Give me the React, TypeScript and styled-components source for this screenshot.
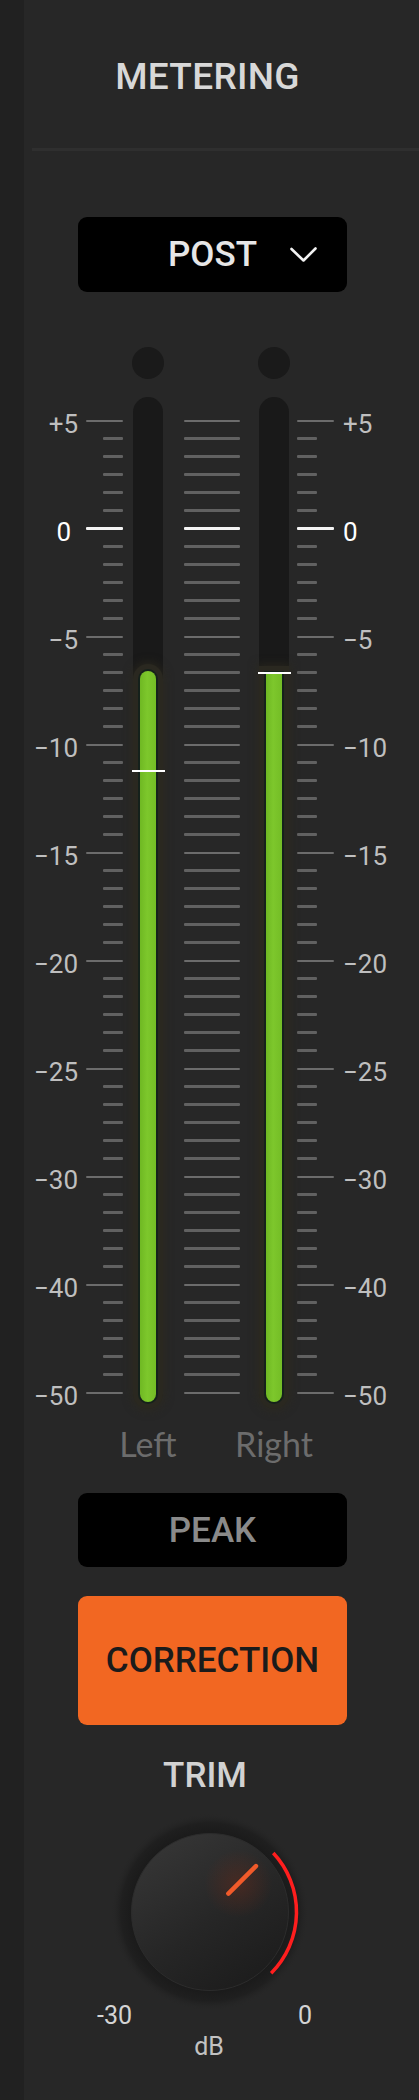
import React from "react";
import styled, { createGlobalStyle } from "styled-components";

const GlobalStyle = createGlobalStyle`
  html, body {
    margin: 0;
    padding: 0;
    background: #272727;
  }
  body {
    font-family: Roboto, "Liberation Sans", sans-serif;
    -webkit-font-smoothing: antialiased;
  }
  * { box-sizing: border-box; }
`;

/* ---------- scale model ---------- */

const ROW = 18; // px between 1-step ticks
const TICKS = 55;
const TRACK_H = 1010;
const SCALE_OFFSET = 23.7; // centre of first tick row, measured from track top

const MAJORS: { db: number; idx: number; label: string }[] = [
  { db: 5, idx: 0, label: "+5" },
  { db: 0, idx: 6, label: "0" },
  { db: -5, idx: 12, label: "−5" },
  { db: -10, idx: 18, label: "−10" },
  { db: -15, idx: 24, label: "−15" },
  { db: -20, idx: 30, label: "−20" },
  { db: -25, idx: 36, label: "−25" },
  { db: -30, idx: 42, label: "−30" },
  { db: -40, idx: 48, label: "−40" },
  { db: -50, idx: 54, label: "−50" },
];

const dbToY = (db: number) => {
  for (let i = 0; i < MAJORS.length - 1; i++) {
    const a = MAJORS[i];
    const b = MAJORS[i + 1];
    if (db <= a.db && db >= b.db) {
      const t = (a.db - db) / (a.db - b.db);
      return SCALE_OFFSET + (a.idx + t * (b.idx - a.idx)) * ROW;
    }
  }
  return db > 5 ? SCALE_OFFSET : SCALE_OFFSET + 54 * ROW;
};

const CHANNELS = [
  { name: "Left", level: -6.6, peak: -11.2 },
  { name: "Right", level: -6.68, peak: -6.68 },
];

/* ---------- layout ---------- */

const Panel = styled.div`
  display: flex;
  width: 419px;
  min-height: 2100px;
  background: #272727;
  overflow: hidden;
`;

const SideRail = styled.div`
  flex: none;
  width: 24px;
  background: #212121;
`;

const Content = styled.div`
  flex: 1;
  display: flex;
  flex-direction: column;
  align-items: center;
  padding-right: 18px;
`;

const Header = styled.header`
  align-self: stretch;
  margin-left: 8px;
  margin-right: -18px;
  height: 151px;
  padding: 58px 36px 0 0;
  border-bottom: 3px solid #2f2f2f;
  display: flex;
  justify-content: center;
  align-items: flex-start;
`;

const Title = styled.h1`
  margin: 0;
  font-size: 37px;
  line-height: 37px;
  font-weight: 500;
  color: #d8d8d8;
  letter-spacing: 0.3px;
`;

const Select = styled.button`
  margin-top: 66px;
  width: 269px;
  height: 75px;
  border: none;
  border-radius: 9px;
  background: #000;
  display: grid;
  grid-template-columns: 1fr auto 1fr;
  align-items: center;
  padding: 0;
  font-family: inherit;
`;

const SelectValue = styled.span`
  grid-column: 2;
  font-size: 35px;
  font-weight: 500;
  color: #e6e6e6;
`;

const Chevron = styled.svg`
  grid-column: 3;
  justify-self: end;
  margin-right: 30px;
`;

/* ---------- meter ---------- */

const MeterRow = styled.div`
  align-self: flex-start;
  margin-left: 2px;
  margin-top: 55px;
  display: flex;
  align-items: flex-start;
`;

const LabelColumn = styled.div<{ $side: "left" | "right" }>`
  width: 52px;
  margin-top: 67.7px;
  margin-left: ${(p) => (p.$side === "right" ? "9px" : "0")};
  display: flex;
  flex-direction: column;
  text-align: ${(p) => (p.$side === "left" ? "right" : "left")};
`;

const LabelRow = styled.div<{ $zero?: boolean; $side: "left" | "right" }>`
  height: ${ROW}px;
  line-height: ${ROW}px;
  font-size: 26px;
  white-space: nowrap;
  color: ${(p) => (p.$zero ? "#ffffff" : "#bfbfbf")};
  padding-right: ${(p) => (p.$zero && p.$side === "left" ? "7px" : "0")};
`;

const TickColumn = styled.div<{ $side: "left" | "right" | "center"; $gap: number; $width: number }>`
  width: ${(p) => p.$width}px;
  margin-left: ${(p) => p.$gap}px;
  margin-top: 64.7px;
  display: flex;
  flex-direction: column;
  align-items: ${(p) =>
    p.$side === "left" ? "flex-end" : p.$side === "right" ? "flex-start" : "stretch"};
`;

const TickRow = styled.div`
  height: ${ROW}px;
  display: flex;
  align-items: center;
`;

const Tick = styled.div<{ $kind: "minor" | "major" | "zero"; $width: number }>`
  width: ${(p) => p.$width}px;
  height: ${(p) => (p.$kind === "zero" ? 3 : p.$kind === "major" ? 2 : 2.5)}px;
  border-radius: 1px;
  background: ${(p) =>
    p.$kind === "zero" ? "#f4f4f4" : p.$kind === "major" ? "#6c6c6c" : "#616161"};
`;

const Channel = styled.div<{ $gap: number }>`
  width: 30px;
  margin-left: ${(p) => p.$gap}px;
  display: flex;
  flex-direction: column;
  align-items: center;
`;

const Led = styled.div`
  flex: none;
  width: 32px;
  height: 32px;
  border-radius: 50%;
  background: #1a1a1a;
`;

const Track = styled.div`
  position: relative;
  margin-top: 18px;
  width: 30px;
  height: ${TRACK_H}px;
  border-radius: 15px;
  background: #191919;
`;

const Fill = styled.div<{ $flat: boolean }>`
  position: absolute;
  left: 7px;
  right: 7px;
  bottom: 5px;
  border-radius: ${(p) => (p.$flat ? "0 0 8px 8px" : "8px")};
  background: linear-gradient(90deg, #6fb823 0%, #7dc72c 45%, #74bd26 100%);
  box-shadow: 0 0 0 2px #15211b, 0 0 0 7px #2a2820, 0 0 8px 9px rgba(44, 41, 31, 0.75);
`;

const PeakMark = styled.div`
  position: absolute;
  left: -1px;
  right: -2px;
  height: 2px;
  background: #ffffff;
`;

const ChannelName = styled.div`
  margin-top: 20px;
  font-family: Lato, "Noto Sans", sans-serif;
  font-size: 34px;
  line-height: 34px;
  color: #6c6c6c;
  white-space: nowrap;
`;

/* ---------- buttons ---------- */

const ModeButton = styled.button<{ $active?: boolean; $height: number; $gap: number }>`
  margin-top: ${(p) => p.$gap}px;
  width: 269px;
  height: ${(p) => p.$height}px;
  border: none;
  border-radius: 9px;
  padding: 0;
  font-family: inherit;
  font-size: 35px;
  font-weight: 500;
  background: ${(p) => (p.$active ? "#f26722" : "#000000")};
  color: ${(p) => (p.$active ? "#1b1b1b" : "#8a8a8a")};
`;

/* ---------- trim knob ---------- */

const KnobTitle = styled.div`
  margin-top: 32.5px;
  margin-right: 15px;
  font-size: 35px;
  line-height: 35px;
  font-weight: 500;
  color: #d2d2d2;
`;

const KnobSvg = styled.svg`
  margin-top: 19.5px;
  margin-right: 5px;
  display: block;
`;

const RangeRow = styled.div`
  margin-top: -9px;
  margin-right: 16px;
  width: 215px;
  display: flex;
  justify-content: space-between;
  font-size: 25px;
  line-height: 25px;
  color: #d4d4d4;
`;

const Unit = styled.div`
  margin-top: 6px;
  margin-right: 7px;
  font-size: 25px;
  line-height: 25px;
  color: #c2c2c2;
`;

const Knob = () => {
  const cx = 100;
  const cy = 100;
  const r = 86.5;
  const a0 = (-43 * Math.PI) / 180;
  const a1 = (45 * Math.PI) / 180;
  const sx = cx + r * Math.cos(a0);
  const sy = cy + r * Math.sin(a0);
  const ex = cx + r * Math.cos(a1);
  const ey = cy + r * Math.sin(a1);
  const ang = (-45 * Math.PI) / 180;
  return (
    <KnobSvg width={200} height={200} viewBox="0 0 200 200">
      <defs>
        <radialGradient id="knobHalo" cx="50%" cy="50%" r="50%">
          <stop offset="0.78" stopColor="#1a1a1a" />
          <stop offset="0.9" stopColor="#1f1f1f" />
          <stop offset="1" stopColor="#272727" stopOpacity="0" />
        </radialGradient>
        <linearGradient id="knobBody" x1="0.2" y1="0.1" x2="0.75" y2="0.95">
          <stop offset="0" stopColor="#343434" />
          <stop offset="0.55" stopColor="#262626" />
          <stop offset="1" stopColor="#1d1d1d" />
        </linearGradient>
        <radialGradient id="knobGlow" cx="0.5" cy="0.5" r="0.5">
          <stop offset="0" stopColor="#6a2a1a" stopOpacity="0.45" />
          <stop offset="1" stopColor="#6a2a1a" stopOpacity="0" />
        </radialGradient>
      </defs>
      <circle cx={cx} cy={cy} r={99} fill="url(#knobHalo)" />
      <circle cx={cx} cy={cy} r={78.5} fill="url(#knobBody)" stroke="#2c2c2c" strokeWidth={1} />
      <circle cx={cx + 40 * Math.cos(ang)} cy={cy + 40 * Math.sin(ang)} r={34} fill="url(#knobGlow)" />
      <line
        x1={cx + 26 * Math.cos(ang)}
        y1={cy + 26 * Math.sin(ang)}
        x2={cx + 65 * Math.cos(ang)}
        y2={cy + 65 * Math.sin(ang)}
        stroke="#f15a2a"
        strokeWidth={4.5}
        strokeLinecap="round"
      />
      <path
        d={`M ${sx} ${sy} A ${r} ${r} 0 0 1 ${ex} ${ey}`}
        fill="none"
        stroke="#ff1e1e"
        strokeWidth={3.5}
      />
    </KnobSvg>
  );
};

/* ---------- page ---------- */

const ticks = Array.from({ length: TICKS }, (_, i) => i);

const Scale = ({ side }: { side: "left" | "right" }) => (
  <LabelColumn $side={side}>
    {ticks.map((i) => {
      const major = MAJORS.find((m) => m.idx === i);
      return (
        <LabelRow key={i} $side={side} $zero={i === 6}>
          {major ? major.label : ""}
        </LabelRow>
      );
    })}
  </LabelColumn>
);

const Ticks = ({
  side,
  gap,
}: {
  side: "left" | "right" | "center";
  gap: number;
}) => {
  const width = side === "center" ? 56 : 37;
  return (
    <TickColumn $side={side} $gap={gap} $width={width}>
      {ticks.map((i) => {
        const kind = i === 6 ? "zero" : i % 6 === 0 ? "major" : "minor";
        const w = side === "center" ? 56 : kind === "minor" ? 20 : 37;
        return (
          <TickRow key={i}>
            <Tick $kind={kind} $width={w} />
          </TickRow>
        );
      })}
    </TickColumn>
  );
};

const Meter = ({
  name,
  level,
  peak,
  gap,
}: {
  name: string;
  level: number;
  peak: number;
  gap: number;
}) => {
  const top = dbToY(level);
  const peakY = dbToY(peak);
  return (
    <Channel $gap={gap}>
      <Led />
      <Track>
        <Fill $flat={Math.abs(peak - level) < 0.2} style={{ height: TRACK_H - 5 - top }} />
        <PeakMark style={{ top: peakY - 1 }} />
      </Track>
      <ChannelName>{name}</ChannelName>
    </Channel>
  );
};

export default function App() {
  return (
    <>
      <GlobalStyle />
      <Panel>
        <SideRail />
        <Content>
          <Header>
            <Title>METERING</Title>
          </Header>

          <Select>
            <SelectValue>POST</SelectValue>
            <Chevron width="27" height="16" viewBox="0 0 27 16">
              <polyline
                points="1.5,2 13.5,13.5 25.5,1.5"
                fill="none"
                stroke="#f2f2f2"
                strokeWidth="2.6"
                strokeLinecap="round"
                strokeLinejoin="round"
              />
            </Chevron>
          </Select>

          <MeterRow>
            <Scale side="left" />
            <Ticks side="left" gap={8} />
            <Meter {...CHANNELS[0]} gap={10} />
            <Ticks side="center" gap={21} />
            <Meter {...CHANNELS[1]} gap={19} />
            <Ticks side="right" gap={8} />
            <Scale side="right" />
          </MeterRow>

          <ModeButton $height={74} $gap={32}>PEAK</ModeButton>
          <ModeButton $active $height={129} $gap={29}>CORRECTION</ModeButton>

          <KnobTitle>TRIM</KnobTitle>
          <Knob />
          <RangeRow>
            <span>-30</span>
            <span>0</span>
          </RangeRow>
          <Unit>dB</Unit>
        </Content>
      </Panel>
    </>
  );
}
